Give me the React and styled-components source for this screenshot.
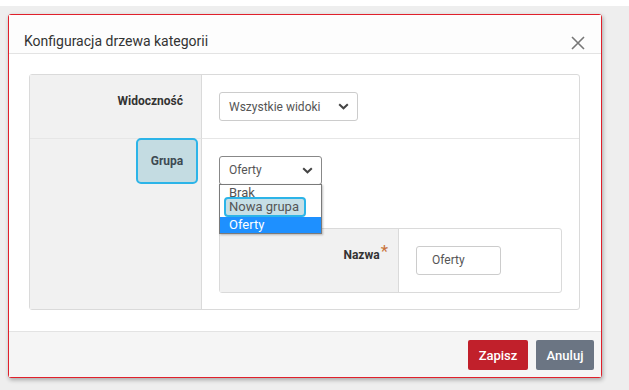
import styled, { createGlobalStyle } from 'styled-components'

const GlobalStyle = createGlobalStyle`
  html, body {
    margin: 0;
    padding: 0;
    background: #ffffff;
    font-family: Roboto, "Liberation Sans", Arial, sans-serif;
  }
`

const Page = styled.div`
  margin-top: 6px;
  height: 384px;
  background: #eeeeee;
  padding: 8px 0 0 8px;
  box-sizing: border-box;
`

const Modal = styled.div`
  width: 594px;
  height: 364px;
  box-sizing: border-box;
  background: #ffffff;
  border: 1px solid #e0202b;
  border-radius: 3px;
  box-shadow: 1px 2px 4px rgba(0, 0, 0, 0.3);
  display: flex;
  flex-direction: column;
`

const Header = styled.div`
  height: 39px;
  box-sizing: border-box;
  border-bottom: 1px solid #e3e3e3;
  display: flex;
  align-items: flex-end;
  justify-content: space-between;
  padding: 0 16px 3px 15px;
  background: #fdfdfd;
`

const Title = styled.h4`
  margin: 0;
  font-size: 14px;
  font-weight: 400;
  color: #333;
  line-height: 16px;
  margin-bottom: 1px;
`

const Close = styled.button`
  border: none;
  background: none;
  padding: 0;
  width: 14px;
  height: 14px;
  cursor: pointer;
  display: flex;
`

const Body = styled.div`
  flex: 1;
  padding: 20px 21px 21px 20px;
`

const Table = styled.div`
  border: 1px solid #dadada;
  border-radius: 3px;
  display: grid;
  grid-template-columns: ${p => p.$label}px 1fr;
  height: ${p => (p.$height ? `${p.$height}px` : 'auto')};
  width: ${p => (p.$full ? '100%' : 'auto')};
  margin-top: ${p => p.$top || 0}px;
  box-sizing: border-box;
`

const LabelCell = styled.div`
  background: #f1f1f1;
  border-right: 1px solid #dadada;
  border-top: ${p => (p.$first ? 'none' : '1px solid #e6e6e6')};
  display: flex;
  justify-content: flex-end;
  align-items: flex-start;
  padding: ${p => p.$pad};
  font-size: 12px;
  font-weight: 700;
  color: #333;
  line-height: 14px;
`

const ValueCell = styled.div`
  border-top: ${p => (p.$first ? 'none' : '1px solid #e6e6e6')};
  padding: ${p => p.$pad};
  display: flex;
  flex-direction: column;
  align-items: flex-start;
`

const Highlight = styled.div`
  background: #c4dce2;
  border: 2px solid #2cb4e8;
  border-radius: 5px;
  width: 58px;
  height: 42px;
  display: flex;
  align-items: center;
  justify-content: center;
  color: #3d4a52;
  margin-right: 1px;
  margin-top: -1px;
`

const Required = styled.span`
  color: #c8733a;
  font-weight: 400;
  font-size: 17px;
  line-height: 10px;
  margin-top: -2px;
  margin-left: 1px;
`

const SelectWrap = styled.div`
  position: relative;
`

const SelectBox = styled.div`
  width: ${p => p.$width}px;
  height: 29px;
  box-sizing: border-box;
  border: 1px solid ${p => (p.$open ? '#888' : '#cccccc')};
  border-radius: 3px;
  display: flex;
  align-items: center;
  justify-content: space-between;
  padding: 0 8px 0 9px;
  font-size: 12px;
  color: #555;
  background: #fff;
`

const Dropdown = styled.ul`
  position: absolute;
  left: 0;
  top: 28px;
  width: 103px;
  box-sizing: border-box;
  margin: 0;
  padding: 0;
  list-style: none;
  background: #fff;
  border: 1px solid #7a7a7a;
  box-shadow: 1px 1px 2px rgba(0, 0, 0, 0.25);
  z-index: 2;
`

const Option = styled.li`
  height: 16px;
  display: flex;
  align-items: flex-end;
  padding-left: 9px;
  font-size: 13px;
  line-height: 16px;
  color: ${p => (p.$selected ? '#fff' : '#555')};
  background: ${p => (p.$selected ? '#1e90ff' : 'transparent')};
  white-space: nowrap;
`

const OptionMark = styled.span`
  display: inline-block;
  margin-left: -5px;
  padding: 0 5px 0 3px;
  height: 16px;
  background: #c6dfe6;
  border: 2px solid #2cb4e8;
  border-radius: 4px;
  line-height: 16px;
`

const TextInput = styled.div`
  width: 85px;
  height: 29px;
  box-sizing: border-box;
  border: 1px solid #cccccc;
  border-radius: 3px;
  display: flex;
  align-items: center;
  padding-left: 15px;
  font-size: 12px;
  color: #555;
`

const Footer = styled.div`
  height: 46px;
  box-sizing: border-box;
  border-top: 1px solid #e3e3e3;
  background: #f5f5f5;
  display: flex;
  justify-content: flex-end;
  align-items: flex-start;
  gap: 8px;
  padding: 8px 7px 0 0;
`

const Button = styled.button`
  height: 30px;
  width: ${p => p.$width}px;
  border: none;
  border-radius: 2px;
  background: ${p => p.$bg};
  color: #fff;
  font-family: inherit;
  font-size: 13px;
  font-weight: 500;
  cursor: pointer;
`

const Chevron = () => (
  <svg width="11" height="7" viewBox="0 0 11 7">
    <path d="M1.2 1.2 L5.5 5.3 L9.8 1.2" fill="none" stroke="#444" strokeWidth="2" />
  </svg>
)

function App() {
  return (
    <>
      <GlobalStyle />
      <Page>
        <Modal>
          <Header>
            <Title>Konfiguracja drzewa kategorii</Title>
            <Close aria-label="Zamknij">
              <svg width="14" height="14" viewBox="0 0 14 14">
                <path d="M1 1 L13 13 M13 1 L1 13" stroke="#777" strokeWidth="1.6" />
              </svg>
            </Close>
          </Header>
          <Body>
            <Table $label={172} $height={236}>
              <LabelCell $first $pad="19px 18px 0 0">Widoczność</LabelCell>
              <ValueCell $first $pad="17px 0 16px 17px">
                <SelectBox $width={139}>
                  Wszystkie widoki
                  <Chevron />
                </SelectBox>
              </ValueCell>
              <LabelCell $pad="0 2px 0 0">
                <Highlight>Grupa</Highlight>
              </LabelCell>
              <ValueCell $pad="17px 17px 16px 17px">
                <SelectWrap>
                  <SelectBox $width={103} $open>
                    Oferty
                    <Chevron />
                  </SelectBox>
                  <Dropdown>
                    <Option>Brak</Option>
                    <Option><OptionMark>Nowa grupa</OptionMark></Option>
                    <Option $selected>Oferty</Option>
                  </Dropdown>
                </SelectWrap>
                <Table $label={179} $full $top={43}>
                  <LabelCell $first $pad="19px 10px 0 0">
                    Nazwa<Required>*</Required>
                  </LabelCell>
                  <ValueCell $first $pad="17px 0 17px 17px">
                    <TextInput>Oferty</TextInput>
                  </ValueCell>
                </Table>
              </ValueCell>
            </Table>
          </Body>
          <Footer>
            <Button $bg="#c1202b" $width={60}>Zapisz</Button>
            <Button $bg="#6b7583" $width={58}>Anuluj</Button>
          </Footer>
        </Modal>
      </Page>
    </>
  )
}

export default App
